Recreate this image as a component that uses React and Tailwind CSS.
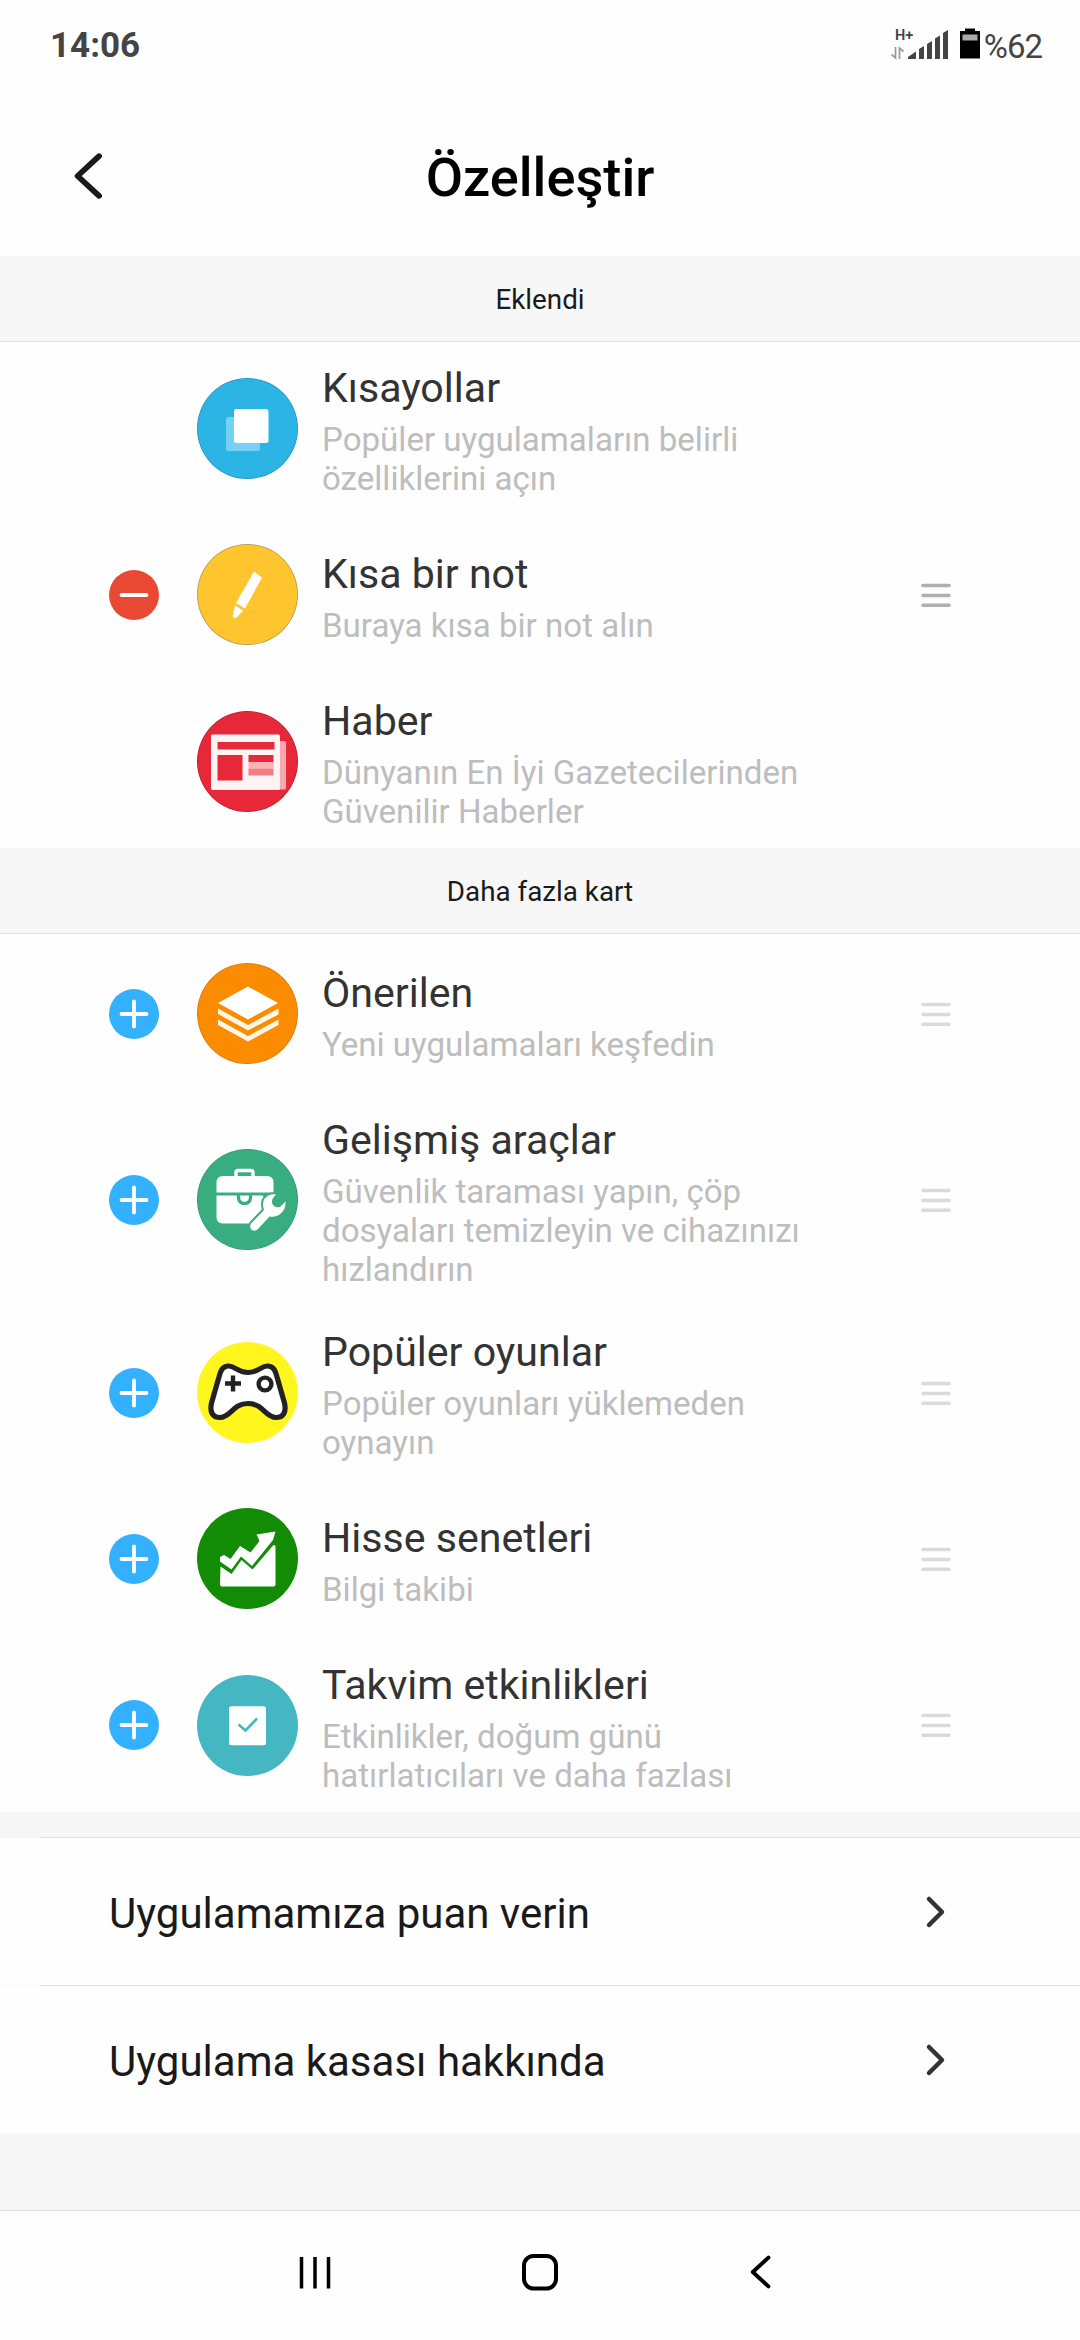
import clsx from 'clsx'

const ADDED = [
  {
    id: 'shortcuts',
    title: 'Kısayollar',
    lines: ['Popüler uygulamaların belirli', 'özelliklerini açın'],
    icon: ShortcutsIcon,
    height: 'h-[173px]',
  },
  {
    id: 'note',
    title: 'Kısa bir not',
    lines: ['Buraya kısa bir not alın'],
    icon: NoteIcon,
    action: 'remove',
    height: 'h-[159px]',
  },
  {
    id: 'news',
    title: 'Haber',
    lines: ['Dünyanın En İyi Gazetecilerinden', 'Güvenilir Haberler'],
    icon: NewsIcon,
    height: 'h-[174px]',
  },
]

const MORE = [
  {
    id: 'suggested',
    title: 'Önerilen',
    lines: ['Yeni uygulamaları keşfedin'],
    icon: LayersIcon,
    action: 'add',
    height: 'h-[159px]',
  },
  {
    id: 'tools',
    title: 'Gelişmiş araçlar',
    lines: ['Güvenlik taraması yapın, çöp', 'dosyaları temizleyin ve cihazınızı', 'hızlandırın'],
    icon: ToolsIcon,
    action: 'add',
    height: 'h-[213px]',
  },
  {
    id: 'games',
    title: 'Popüler oyunlar',
    lines: ['Popüler oyunları yüklemeden', 'oynayın'],
    icon: GamepadIcon,
    action: 'add',
    height: 'h-[173px]',
  },
  {
    id: 'stocks',
    title: 'Hisse senetleri',
    lines: ['Bilgi takibi'],
    icon: StocksIcon,
    action: 'add',
    height: 'h-[159px]',
  },
  {
    id: 'calendar',
    title: 'Takvim etkinlikleri',
    lines: ['Etkinlikler, doğum günü', 'hatırlatıcıları ve daha fazlası'],
    icon: CalendarIcon,
    action: 'add',
    height: 'h-[174px]',
  },
]

function Disc({ fill, rim, children }) {
  return (
    <svg viewBox="0 0 101 101" className="size-[101px] shrink-0">
      <circle cx="50.5" cy="50.5" r="50.5" fill={rim || fill} />
      <circle cx="50.5" cy="50.5" r="49.7" fill={fill} />
      {children}
    </svg>
  )
}

function ShortcutsIcon() {
  return (
    <Disc fill="#2cb4e4" rim="#2794bb">
      <rect x="29" y="39" width="34" height="34" rx="2.5" fill="#76d2f5" />
      <rect x="37" y="31" width="34.5" height="34" rx="2.5" fill="#fff" />
    </Disc>
  )
}

function NoteIcon() {
  return (
    <Disc fill="#fec52e" rim="#b79748">
      <path d="M57 27.5 65 33.5 48 64.5 39 59Z" fill="#fff" />
      <path d="M38 61.5 46 66.5 39.8 73.4Q36.2 75.2 35.6 72Z" fill="#fff" />
    </Disc>
  )
}

function NewsIcon() {
  return (
    <Disc fill="#e72839" rim="#b8202e">
      <rect x="76" y="30" width="13" height="48.5" rx="1.5" fill="#f6a9ae" />
      <rect x="14" y="23.5" width="69" height="55.5" rx="1.5" fill="#fff3f4" />
      <rect x="20.5" y="31" width="57" height="7.5" fill="#e32b3c" />
      <rect x="20.5" y="44" width="25" height="25.5" fill="#e72839" />
      <rect x="51.5" y="44" width="25" height="7" fill="#e32b3c" />
      <rect x="51.5" y="51" width="25" height="6.5" fill="#fbb2b7" />
      <rect x="51.5" y="57.5" width="25" height="7" fill="#f57b84" />
    </Disc>
  )
}

function LayersIcon() {
  return (
    <Disc fill="#fb8c00" rim="#d57c0c">
      <path d="M51 23.5 81 40 51 56.5 21 40Z" fill="#fff" />
      <path d="M21 45.5 51 62 81.5 45.5V51.5L51 67.5 21 51Z" fill="#fff6e8" />
      <path d="M21 56.5 51 73 81.5 56.5V62L51 78.5 21 62Z" fill="#fff6e8" />
    </Disc>
  )
}

function ToolsIcon() {
  return (
    <Disc fill="#38ae80" rim="#33976f">
      <path d="M39 28V23.5Q39 21.5 41 21.5H54Q56 21.5 56 23.5V28" fill="none" stroke="#fff" strokeWidth="3.4" />
      <path d="M19.5 43.5V33.5Q19.5 27 26 27H70Q76.5 27 76.5 33.5V43.5Z" fill="#fff" />
      <path d="M19.5 46.5H66L70 56 52 74.5H26Q19.5 74.5 19.5 68Z" fill="#fff" />
      <path d="M41.5 46V49Q42 54.5 47.5 54.5T53.5 49V46" fill="none" stroke="#38ae80" strokeWidth="3.2" />
      <path
        d="M79 45.5C72 44 66 49 66 55C66 57 66.3 59 67 61L54.5 74C50.5 79 56.5 84.5 61 80L72.5 67.5C81 69.5 89.5 62 88.5 52.5L83 58C80 59 76 57.5 75 54C74.5 51 76 48.5 79 45.5Z"
        fill="#fff"
        stroke="#38ae80"
        strokeWidth="4"
        paintOrder="stroke"
        strokeLinejoin="round"
      />
    </Disc>
  )
}

function GamepadIcon() {
  return (
    <Disc fill="#fff61d" rim="#fff53a">
      <path
        d="M51 30.5C40 30.5 38 23.5 31 24C25 24.5 23.5 29 22 35L14.5 61C12.500 70 15.500 75.500 23 75.500C34 75.500 35.500 61.500 51 61.500S68 75.500 79 75.500C86.500 75.500 89.500 70 87.500 61L80 35C78.500 29 77 24.500 71 24C64 23.500 62 30.500 51 30.500Z"
        fill="#fff"
        stroke="#222"
        strokeWidth="5.2"
        strokeLinejoin="round"
      />
      <path d="M28 41.5H44M36 33.5V49.5" stroke="#222" strokeWidth="4.4" />
      <circle cx="68" cy="42" r="6.4" fill="#fff" stroke="#222" strokeWidth="4.4" />
    </Disc>
  )
}

function StocksIcon() {
  return (
    <Disc fill="#138c05">
      <path
        d="M23.5 58.5 34.5 66 44.5 52 55.5 61.5 76 37.5Q78.5 36 78.5 39V76.5Q78.5 78.5 76.5 78.5H25Q23 78.5 23 76.5Z"
        fill="#fff"
      />
      <path
        d="M23 49 27 47 33.5 51 43 38 53.5 44.5 62.5 33 59.5 26.5 78.5 23.5 76 32 55 58 44 48.5 34.5 61.5 23 53.5Z"
        fill="#fff"
      />
    </Disc>
  )
}

function CalendarIcon() {
  return (
    <Disc fill="#44b7c2">
      <rect x="32" y="31.3" width="37" height="39" rx="2.5" fill="#fff" />
      <path d="M41.5 49.5 48.5 55.5 60 43.5" fill="none" stroke="#44b7c2" strokeWidth="2.6" />
    </Disc>
  )
}

function ActionButton({ type }) {
  if (!type) return <div className="size-[50px] shrink-0" />
  return (
    <button
      type="button"
      className={clsx('size-[50px] shrink-0 rounded-full', type === 'add' ? 'bg-[#33b1ff]' : 'bg-[#e94832]')}
    >
      <svg viewBox="0 0 50 50" className="size-[50px]" fill="none" stroke="#fff" strokeWidth="3.8" strokeLinecap="round">
        <path d="M12.5 25H37.5" />
        {type === 'add' && <path d="M25 12.5V37.5" />}
      </svg>
    </button>
  )
}

function DragHandle({ active }) {
  return (
    <svg
      viewBox="0 0 30 24"
      className={clsx('h-6 w-[30px] shrink-0', active ? 'text-[#b0b0b0]' : 'text-[#dadada]')}
      stroke="currentColor"
      strokeWidth="3.6"
      strokeLinecap="round"
    >
      <path d="M2 2.5H28M2 12.5H28M2 22.2H28" />
    </svg>
  )
}

function Chevron({ left, className, strokeWidth = 4.5 }) {
  return (
    <svg
      viewBox="0 0 20 30"
      className={className}
      fill="none"
      stroke="currentColor"
      strokeWidth={strokeWidth}
      strokeLinecap="round"
      strokeLinejoin="round"
    >
      <path d={left ? 'M17 3 4 15 17 27' : 'M3 2 16 15 3 28'} />
    </svg>
  )
}

function SectionHeader({ children }) {
  return (
    <div className="flex h-[86px] items-center justify-center border-b border-[#e3e3e3] bg-[#f7f7f7] pt-0.5 text-[27.8px] text-[#1a1a1a]">
      {children}
    </div>
  )
}

function CardRow({ card }) {
  const Icon = card.icon
  return (
    <li className={clsx('flex items-center pr-[129px] pl-[109px]', card.height)}>
      <ActionButton type={card.action} />
      <div className="ml-[38px]">
        <Icon />
      </div>
      <div className="ml-6 flex-1 pt-1.5 whitespace-nowrap">
        <h2 className="text-[41.1px] leading-[47px] text-[#333333]">{card.title}</h2>
        <p className="mt-2 text-[33.1px] leading-[39px] text-[#bdbdbd]">
          {card.lines.map((line) => (
            <span key={line} className="block">
              {line}
            </span>
          ))}
        </p>
      </div>
      {card.action && <DragHandle active={card.action === 'remove'} />}
    </li>
  )
}

function LinkRow({ children }) {
  return (
    <div className="flex h-[147px] items-center justify-between bg-[#fefefe] pr-[134px] pl-[109px] text-[42px] text-[#1a1a1a]">
      <span className="pt-1">{children}</span>
      <Chevron className="h-[30px] w-5 overflow-visible text-[#333333]" />
    </div>
  )
}

function StatusBar() {
  return (
    <div className="flex h-[90px] items-center justify-between pt-[3px] pr-[38px] pl-[50px] text-[#444444]">
      <span className="text-[35px] font-bold">14:06</span>
      <div className="flex items-center">
        <svg viewBox="0 0 93 34" className="mb-[7px] h-[34px] w-[93px]" fill="#444">
          <text x="4" y="14" fontSize="14.5" fontWeight="600" fontFamily="Roboto">
            H+
          </text>
          <path d="M17 33V31L25 25.5V33ZM28 33V23L33 20V33ZM36 33V18L41 15V33ZM44 33V12.5L49 9.5V33ZM52 33V7L57 4V33Z" />
          <path d="M4.5 21V32L0.5 28.5M8.5 33V22L12.5 25.5" fill="none" stroke="#999" strokeWidth="1.7" />
          <path d="M69 5H74V2.5H84V5H89V32.5H69Z" fill="#000" />
          <path d="M71.5 8.5H86.5V14.5H71.5Z" fill="#aaa" />
        </svg>
        <span className="text-[33px] tracking-[-1px]">%62</span>
      </div>
    </div>
  )
}

function NavBar() {
  return (
    <nav className="flex h-[130px] justify-between border-t border-[#e0e0e0] bg-[#fefefe] pt-[42px] pr-[308px] pl-[298px] text-black">
      <svg viewBox="0 0 34 38" className="h-[38px] w-[34px]" stroke="currentColor" strokeWidth="3.5">
        <path d="M3.5 4V35.5M17 4V35.5M30.5 4V35.5" />
      </svg>
      <svg viewBox="0 0 38 38" className="h-[38px] w-[38px]" fill="none" stroke="currentColor" strokeWidth="4">
        <rect x="3" y="3" width="32" height="32.5" rx="9.5" />
      </svg>
      <Chevron left strokeWidth="3.3" className="mt-px h-9 w-6" />
    </nav>
  )
}

export default function App() {
  return (
    <div className="flex h-[2340px] w-[1080px] flex-col overflow-hidden bg-[#fefefe] font-[Roboto,sans-serif]">
      <StatusBar />
      <header className="flex h-[166px] items-center pt-1.5 pr-[72px] pl-[71px]">
        <Chevron left strokeWidth="3.5" className="h-[50px] w-[33px] text-[#1a1a1a]" />
        <h1 className="flex-1 pt-1 pr-8 text-center text-[54.2px] font-medium text-black">Özelleştir</h1>
      </header>

      <SectionHeader>Eklendi</SectionHeader>
      <ul>
        {ADDED.map((card) => (
          <CardRow key={card.id} card={card} />
        ))}
      </ul>

      <SectionHeader>Daha fazla kart</SectionHeader>
      <ul>
        {MORE.map((card) => (
          <CardRow key={card.id} card={card} />
        ))}
      </ul>

      <div className="flex-1 bg-[#f7f7f7] pt-[25px]">
        <div className="ml-10 h-px bg-[#e0e0e0]" />
        <LinkRow>Uygulamamıza puan verin</LinkRow>
        <div className="ml-10 h-px bg-[#e0e0e0]" />
        <LinkRow>Uygulama kasası hakkında</LinkRow>
      </div>
      <NavBar />
    </div>
  )
}
